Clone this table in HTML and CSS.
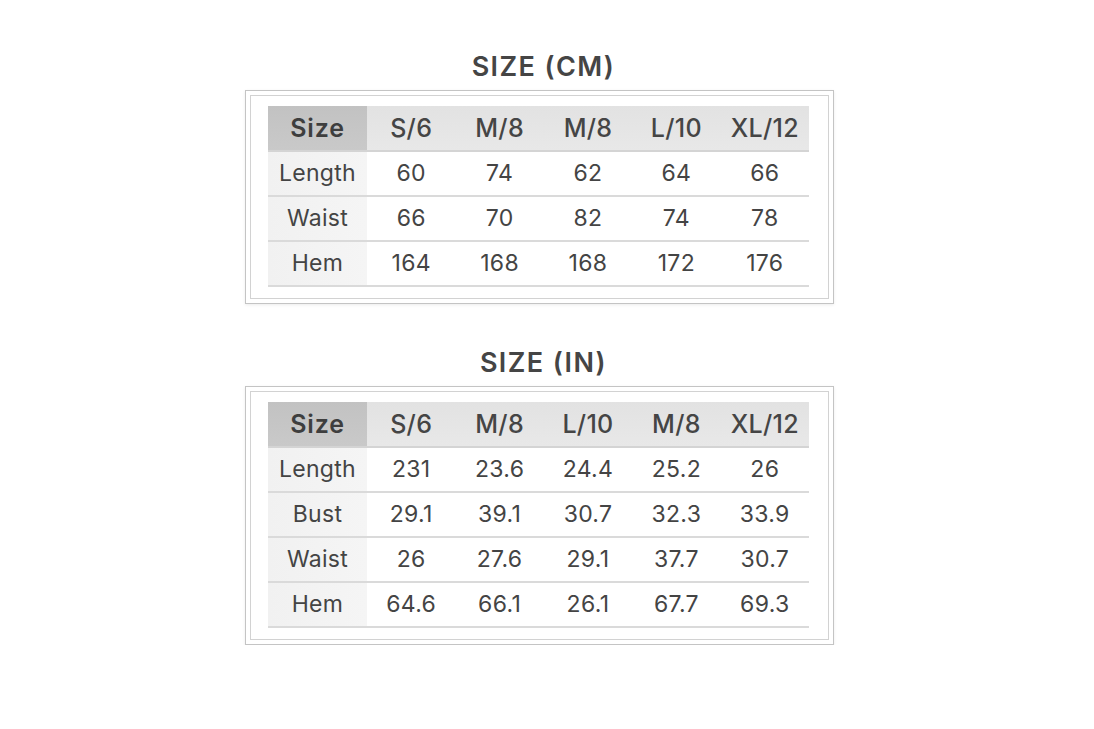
FILE: index.html
```html
<!DOCTYPE html>
<html>
<head>
<meta charset="utf-8">
<link rel="stylesheet" href="styles.css">
</head>
<body>
<div class="page">
  <section class="chart">
    <h2 class="title">SIZE (CM)</h2>
    <div class="frame">
      <div class="frame-inner">
        <table class="sizes">
          <thead>
            <tr><th class="lead">Size</th><th>S/6</th><th>M/8</th><th>M/8</th><th>L/10</th><th class="xl">XL/12</th></tr>
          </thead>
          <tbody>
            <tr><td class="lead">Length</td><td>60</td><td>74</td><td>62</td><td>64</td><td>66</td></tr>
            <tr><td class="lead">Waist</td><td>66</td><td>70</td><td>82</td><td>74</td><td>78</td></tr>
            <tr><td class="lead">Hem</td><td>164</td><td>168</td><td>168</td><td>172</td><td>176</td></tr>
          </tbody>
        </table>
      </div>
    </div>
  </section>
  <section class="chart second">
    <h2 class="title">SIZE (IN)</h2>
    <div class="frame">
      <div class="frame-inner">
        <table class="sizes">
          <thead>
            <tr><th class="lead">Size</th><th>S/6</th><th>M/8</th><th>L/10</th><th>M/8</th><th>XL/12</th></tr>
          </thead>
          <tbody>
            <tr><td class="lead">Length</td><td>231</td><td>23.6</td><td>24.4</td><td>25.2</td><td>26</td></tr>
            <tr><td class="lead">Bust</td><td>29.1</td><td>39.1</td><td>30.7</td><td>32.3</td><td>33.9</td></tr>
            <tr><td class="lead">Waist</td><td>26</td><td>27.6</td><td>29.1</td><td>37.7</td><td>30.7</td></tr>
            <tr><td class="lead">Hem</td><td>64.6</td><td>66.1</td><td>26.1</td><td>67.7</td><td>69.3</td></tr>
          </tbody>
        </table>
      </div>
    </div>
  </section>
</div>
</body>
</html>
```

FILE: styles.css
```css
html, body {
  margin: 0;
  padding: 0;
  background: #ffffff;
}

body {
  font-family: "Inter", "Lato", "Liberation Sans", sans-serif;
  color: #444444;
}

.page {
  width: 589px;
  margin-left: 245px;
  padding-top: 51px;
}

.chart.second {
  margin-top: 43px;
}

.title {
  margin: 0 0 7px 0;
  text-align: center;
  font-size: 27px;
  line-height: 32px;
  font-weight: 600;
  letter-spacing: 1.4px;
  color: #454545;
  padding-left: 8px;
}

.frame {
  border: 1px solid #c4c4c4;
  padding: 4px;
  box-shadow: 0 1px 3px rgba(0,0,0,0.08);
}

.frame-inner {
  border: 1px solid #d2d2d2;
  padding: 10px 18px 11px 17px;
}

.sizes {
  width: 541px;
  border-collapse: collapse;
  table-layout: fixed;
}

.sizes th,
.sizes td {
  height: 43px;
  padding: 0;
  line-height: 1;
  text-align: center;
  vertical-align: middle;
}

.sizes th {
  height: 44px;
  font-size: 25px;
  font-weight: 500;
  letter-spacing: 0.3px;
  background: linear-gradient(#e2e2e2, #e8e8e8);
  color: #454545;
  border-bottom: 2px solid #d4d4d4;
}

.sizes th.lead {
  width: 99px;
  background: linear-gradient(#c2c2c2, #c9c9c9);
  font-weight: 600;
  letter-spacing: 0.8px;
  color: #3e3e3e;
}

.sizes td {
  font-size: 23px;
  font-weight: 400;
  letter-spacing: 0.3px;
  color: #444444;
  border-bottom: 2px solid #dadada;
}

.sizes td.lead {
  background: linear-gradient(90deg, #f1f1f1, #f5f5f5);
}
```
